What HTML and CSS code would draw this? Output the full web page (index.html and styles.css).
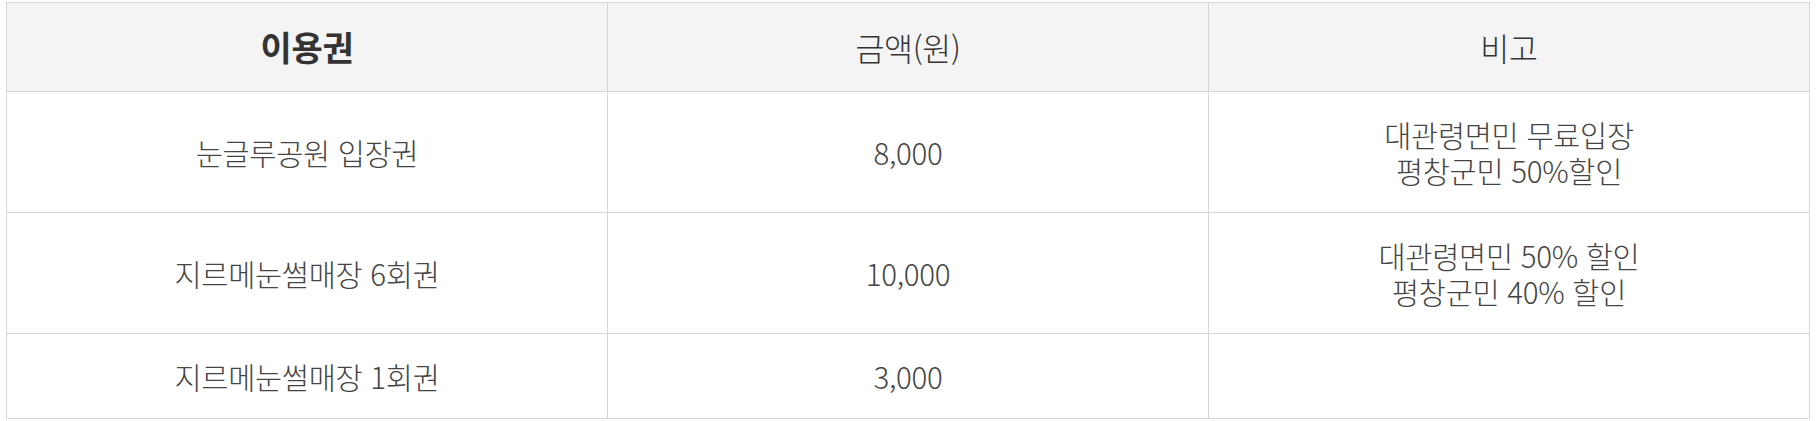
FILE: index.html
```html
<!DOCTYPE html>
<html lang="ko">
<head>
<meta charset="utf-8">
<title>이용권 요금</title>
<link rel="stylesheet" href="styles.css">
</head>
<body>
<div class="page">
  <table class="fee-table">
    <colgroup>
      <col class="col">
      <col class="col">
      <col class="col">
    </colgroup>
    <thead>
      <tr class="head-row">
        <th class="th-strong">이용권</th>
        <th>금액(원)</th>
        <th>비고</th>
      </tr>
    </thead>
    <tbody>
      <tr class="row-double">
        <td>눈글루공원 입장권</td>
        <td>8,000</td>
        <td>대관령면민 무료입장<br>평창군민 50%할인</td>
      </tr>
      <tr class="row-double">
        <td>지르메눈썰매장 6회권</td>
        <td>10,000</td>
        <td>대관령면민 50% 할인<br>평창군민 40% 할인</td>
      </tr>
      <tr class="row-single">
        <td>지르메눈썰매장 1회권</td>
        <td>3,000</td>
        <td></td>
      </tr>
    </tbody>
  </table>
</div>
</body>
</html>
```

FILE: styles.css
```css
html, body {
  margin: 0;
  padding: 0;
  background: #ffffff;
}

.page {
  padding: 2px 6px 0 6px;
}

.fee-table {
  width: 100%;
  border-collapse: collapse;
  table-layout: fixed;
  font-family: "Noto Sans CJK KR", "Noto Sans", sans-serif;
  color: #444444;
}

.col {
  width: 33.333%;
}

.fee-table th,
.fee-table td {
  border: 1px solid #d6d6d6;
  text-align: center;
  vertical-align: middle;
  padding: 0 10px;
  font-size: 29.5px;
  line-height: 36px;
  font-weight: 300;
  letter-spacing: -0.3px;
}

.fee-table th {
  background: #f4f4f4;
  color: #333333;
  font-size: 31.5px;
}

.fee-table .th-strong {
  font-size: 34px;
  font-weight: 700;
}

.head-row {
  height: 89px;
}

.row-double {
  height: 121px;
}

.row-single {
  height: 85px;
}
```
